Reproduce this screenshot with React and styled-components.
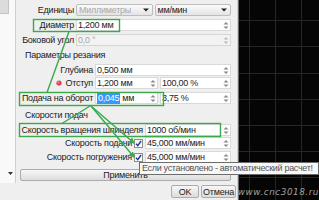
import React from 'react';
import styled, { createGlobalStyle } from 'styled-components';

const Global = createGlobalStyle`
  html, body { margin: 0; padding: 0; background: #000; overflow: hidden; }
  body { font-family: "Liberation Sans", Arial, sans-serif; }
`;

const Screen = styled.div`
  position: relative;
  width: 319px;
  height: 200px;
  display: flex;
  overflow: hidden;
  font-family: "Liberation Sans", Arial, sans-serif;
  font-size: 9px;
  letter-spacing: -0.25px;
  color: #1c1c1c;
`;

const Panel = styled.div`
  width: 237px;
  flex: none;
  background: #efefef;
  display: flex;
  flex-direction: column;
`;

const Body = styled.div`
  height: 183px;
  display: flex;
`;

const SideStrip = styled.div`
  width: 15px;
  flex: none;
  background: #f9f9f9;
  border-right: 1px solid #cfcfcf;
  display: flex;
  flex-direction: column;
  justify-content: space-between;
`;

const Thumb = styled.div`
  width: 8px;
  height: 13px;
  background: #dcdcdc;
  border-right: 1px solid #c4c4c4;
  border-bottom: 1px solid #c4c4c4;
`;

const StripArrow = styled.svg`
  align-self: flex-end;
  margin: 0 2px 8px 0;
`;

const Form = styled.div`
  flex: 1;
  display: flex;
  flex-direction: column;
  padding-right: 6px;
`;

const Row = styled.div`
  display: flex;
  align-items: center;
  gap: 2px;
  height: 12px;
  margin-top: ${p => p.$mt || 0}px;
`;

const Label = styled.div`
  width: ${p => p.$w}px;
  flex: none;
  display: flex;
  align-items: center;
  justify-content: flex-end;
  white-space: nowrap;
`;

const Field = styled.div`
  flex: ${p => (p.$w ? 'none' : '1')};
  width: ${p => (p.$w ? `${p.$w}px` : 'auto')};
  height: 12px;
  box-sizing: border-box;
  border: 1px solid ${p => (p.$disabled ? '#d6d6d6' : '#d9d9d9')};
  background: ${p => (p.$disabled ? '#f3f3f3' : '#ffffff')};
  color: ${p => (p.$disabled ? '#a6a6a6' : '#1c1c1c')};
  display: flex;
  align-items: center;
  padding-left: 1px;
  white-space: nowrap;
`;

const Spin = styled.svg`
  margin-left: auto;
  margin-right: 1px;
  flex: none;
`;

const Sel = styled.span`
  background: #3399ff;
  color: #fff;
  padding: 0 1px;
  margin-right: 2px;
  line-height: 11px;
`;

const Combo = styled.div`
  flex: 1;
  height: 12px;
  box-sizing: border-box;
  border: 1px solid #bdbdbd;
  border-radius: 2px;
  background: linear-gradient(#fbfbfb, #e4e4e4);
  color: ${p => (p.$disabled ? '#a8a8a8' : '#1c1c1c')};
  display: flex;
  align-items: center;
  justify-content: space-between;
  padding: 0 3px 0 2px;
  white-space: nowrap;
`;

const GroupTitle = styled.div`
  height: ${p => p.$h}px;
  box-sizing: border-box;
  padding: ${p => p.$pt || 0}px 0 0 9px;
  display: flex;
  align-items: center;
  white-space: nowrap;
`;

const Check = styled.div`
  width: 9px;
  height: 9px;
  flex: none;
  box-sizing: border-box;
  border: 1px solid #8e8e8e;
  background: linear-gradient(#f2f2f2, #ffffff);
  display: flex;
  align-items: center;
  justify-content: center;
`;

const Button = styled.div`
  height: ${p => p.$h || 12}px;
  width: ${p => (p.$w ? `${p.$w}px` : 'auto')};
  box-sizing: border-box;
  border: 1px solid #acacac;
  border-radius: 2px;
  background: linear-gradient(#f7f7f7, #dcdcdc);
  display: flex;
  align-items: center;
  justify-content: center;
  white-space: nowrap;
  color: #1c1c1c;
`;

const ApplyButton = styled(Button)`
  margin: 6px 0 0 4px;
`;

const BottomBar = styled.div`
  height: 17px;
  display: flex;
  justify-content: flex-end;
  align-items: flex-start;
  gap: 2px;
  padding: 2px 1px 0 0;
  box-sizing: border-box;
`;

const Divider = styled.div`
  width: 2px;
  flex: none;
  background: linear-gradient(to right, #cfcfcf 50%, #6a6a6a 50%);
`;

const Canvas = styled.div`
  flex: 1;
  background: #050505;
  position: relative;
`;

const GridSvg = styled.svg`
  display: block;
  width: 100%;
  height: 100%;
`;

const Tooltip = styled.div`
  position: absolute;
  left: 139px;
  top: 162px;
  right: 0;
  height: 13px;
  box-sizing: border-box;
  background: #f7f7f7;
  border: 1px solid #6c6c6c;
  color: #555;
  font-size: 9px;
  letter-spacing: -0.32px;
  line-height: 11px;
  padding-left: 2px;
  white-space: nowrap;
  overflow: hidden;
`;

const Watermark = styled.div`
  position: absolute;
  right: 0;
  top: 186px;
  font-family: "DejaVu Sans", sans-serif;
  font-style: italic;
  font-size: 8.8px;
  letter-spacing: 0.55px;
  line-height: 12px;
  color: #a2a2a2;
  white-space: nowrap;
`;

const Overlay = styled.svg`
  position: absolute;
  left: 0;
  top: 0;
  pointer-events: none;
`;

const RedDot = styled.svg`
  margin-right: 3px;
  flex: none;
`;

const Spinner = ({ faded }) => (
  <Spin width="6" height="9" viewBox="0 0 6 9">
    <path d="M0.5 3.5 L3 1 L5.5 3.5 Z" fill={faded ? '#bdbdbd' : '#8a8a8a'} />
    <path d="M0.5 5.5 L3 8 L5.5 5.5 Z" fill={faded ? '#bdbdbd' : '#8a8a8a'} />
  </Spin>
);

const ComboArrow = () => (
  <svg width="6" height="4" viewBox="0 0 6 4">
    <path d="M0 0.5 L6 0.5 L3 3.5 Z" fill="#222" />
  </svg>
);

const CheckMark = () => (
  <svg width="7" height="7" viewBox="0 0 7 7">
    <path d="M1 3.8 L2.8 5.6 L6 1" fill="none" stroke="#1b3c8f" strokeWidth="1.4" />
  </svg>
);

const GREEN = '#3aa84c';

export default function App() {
  const vLines = [10, 36, 62];
  const hLines = [20, 46, 73, 99, 125, 151, 177];
  return (
    <>
      <Global />
      <Screen>
        <Panel>
          <Body>
            <SideStrip>
              <Thumb />
              <StripArrow width="5" height="3" viewBox="0 0 5 3">
                <path d="M0 0 L5 0 L2.5 3 Z" fill="#333" />
              </StripArrow>
            </SideStrip>
            <Form>
              <Row $mt={4}>
                <Label $w={58}>Единицы</Label>
                <Combo $disabled>
                  <span>Миллиметры</span>
                  <ComboArrow />
                </Combo>
                <Combo>
                  <span>мм/мин</span>
                  <ComboArrow />
                </Combo>
              </Row>
              <Row $mt={3}>
                <Label $w={58}>Диаметр</Label>
                <Field>
                  1,200 мм
                  <Spinner />
                </Field>
              </Row>
              <Row $mt={3}>
                <Label $w={58}>Боковой угол</Label>
                <Field $disabled>
                  0,0 °
                  <Spinner faded />
                </Field>
              </Row>
              <GroupTitle $h={18}>Параметры резания</GroupTitle>
              <Row>
                <Label $w={77}>Глубина</Label>
                <Field>
                  0,500 мм
                  <Spinner />
                </Field>
              </Row>
              <Row $mt={1}>
                <Label $w={77}>
                  <RedDot width="6" height="6" viewBox="0 0 6 6">
                    <circle cx="3" cy="3" r="2.6" fill="#d9434f" />
                    <circle cx="2.4" cy="2.3" r="0.9" fill="#f3a3aa" />
                  </RedDot>
                  Отступ
                </Label>
                <Field $w={63}>
                  1,200 мм
                  <Spinner />
                </Field>
                <Field>
                  100,00 %
                  <Spinner />
                </Field>
              </Row>
              <Row $mt={3}>
                <Label $w={77}>Подача на оборот</Label>
                <Field $w={63}>
                  <Sel>0,045</Sel>мм
                  <Spinner />
                </Field>
                <Field>
                  3,75 %
                  <Spinner />
                </Field>
              </Row>
              <GroupTitle $h={20} $pt={2}>Скорости подач</GroupTitle>
              <Row>
                <Label $w={127}>Скорость вращения шпинделя</Label>
                <Field>
                  1000 об/мин
                  <Spinner />
                </Field>
              </Row>
              <Row $mt={1}>
                <Label $w={116}>Скорость подачи</Label>
                <Check>
                  <CheckMark />
                </Check>
                <Field>
                  45,000 мм/мин
                  <Spinner />
                </Field>
              </Row>
              <Row $mt={2}>
                <Label $w={116}>Скорость погружения</Label>
                <Check>
                  <CheckMark />
                </Check>
                <Field>
                  45,000 мм/мин
                  <Spinner />
                </Field>
              </Row>
              <ApplyButton>Применить</ApplyButton>
            </Form>
          </Body>
          <BottomBar>
            <Button $w={28} $h={13}>OK</Button>
            <Button $w={35} $h={13}>Отмена</Button>
          </BottomBar>
        </Panel>
        <Divider />
        <Canvas>
          <GridSvg>
            {vLines.map(x => (
              <line key={`v${x}`} x1={x + 0.5} y1="0" x2={x + 0.5} y2="200" stroke="#262626" strokeWidth="1" />
            ))}
            {hLines.map(y => (
              <line key={`h${y}`} x1="0" y1={y + 0.5} x2="80" y2={y + 0.5} stroke="#262626" strokeWidth="1" />
            ))}
          </GridSvg>
        </Canvas>

        <Tooltip>Если установлено - автоматический расчет!</Tooltip>
        <Watermark>www.cnc3018.ru</Watermark>

        <Overlay width="319" height="200" viewBox="0 0 319 200">
          <defs>
            <marker id="ah" markerWidth="6" markerHeight="6" refX="5" refY="3" orient="auto" markerUnits="userSpaceOnUse">
              <path d="M0 0 L6 3 L0 6 Z" fill={GREEN} />
            </marker>
          </defs>
          <g fill="none" stroke={GREEN} strokeWidth="1.4">
            <rect x="33.5" y="19.5" width="86" height="12" />
            <rect x="19.5" y="92.5" width="144" height="13" />
            <rect x="19.5" y="123.5" width="201" height="13" />
            <line x1="69" y1="31.5" x2="47" y2="92.5" />
            <line x1="90" y1="106" x2="62" y2="123.5" />
            <line x1="91" y1="106" x2="134" y2="143" markerEnd="url(#ah)" />
            <line x1="91" y1="106" x2="134" y2="157" markerEnd="url(#ah)" />
          </g>
        </Overlay>
      </Screen>
    </>
  );
}
